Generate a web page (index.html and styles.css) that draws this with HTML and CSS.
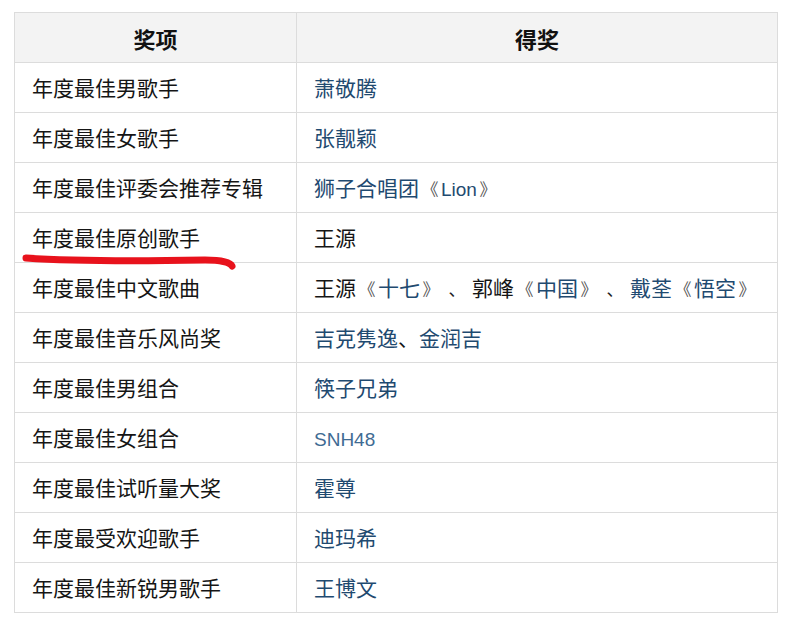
FILE: index.html
```html
<!DOCTYPE html>
<html lang="zh-CN">
<head>
<meta charset="utf-8">
<title>奖项</title>
<link rel="stylesheet" href="styles.css">
</head>
<body>
<div class="page">
  <table class="awards">
    <thead>
      <tr><th class="c1">奖项</th><th>得奖</th></tr>
    </thead>
    <tbody>
      <tr><td class="c1">年度最佳男歌手</td><td><span class="lk">萧敬腾</span></td></tr>
      <tr><td class="c1">年度最佳女歌手</td><td><span class="lk">张靓颖</span></td></tr>
      <tr><td class="c1">年度最佳评委会推荐专辑</td><td><span class="lk">狮子合唱团</span><span class="q">《</span><span class="lk lat">Lion</span><span class="q">》</span></td></tr>
      <tr><td class="c1">年度最佳原创歌手</td><td>王源</td></tr>
      <tr><td class="c1">年度最佳中文歌曲</td><td>王源<span class="q">《</span><span class="lk">十七</span><span class="q">》</span><span class="q dun">、</span>郭峰<span class="q">《</span><span class="lk">中国</span><span class="q">》</span><span class="q dun">、</span><span class="lk">戴荃</span><span class="q">《</span><span class="lk">悟空</span><span class="q">》</span></td></tr>
      <tr><td class="c1">年度最佳音乐风尚奖</td><td><span class="lk">吉克隽逸</span>、<span class="lk">金润吉</span></td></tr>
      <tr><td class="c1">年度最佳男组合</td><td><span class="lk">筷子兄弟</span></td></tr>
      <tr><td class="c1">年度最佳女组合</td><td><span class="lk lat light">SNH48</span></td></tr>
      <tr><td class="c1">年度最佳试听量大奖</td><td><span class="lk">霍尊</span></td></tr>
      <tr><td class="c1">年度最受欢迎歌手</td><td><span class="lk">迪玛希</span></td></tr>
      <tr><td class="c1">年度最佳新锐男歌手</td><td><span class="lk">王博文</span></td></tr>
    </tbody>
  </table>
  <svg class="mark" width="260" height="30" viewBox="0 0 260 30" aria-hidden="true">
    <path d="M26 12 C 70 15, 150 15, 205 14 C 220 14, 230 16, 232 20" fill="none" stroke="#e8121c" stroke-width="7" stroke-linecap="round"/>
  </svg>
</div>
</body>
</html>
```
FILE: styles.css
```css
html, body {
  margin: 0;
  padding: 0;
  background: #ffffff;
}
.page {
  position: relative;
  width: 800px;
  height: 622px;
  padding: 12px 0 0 14px;
  box-sizing: border-box;
  overflow: hidden;
}
.awards {
  border-collapse: collapse;
  width: 764px;
  font-family: "Noto Sans CJK SC", "Liberation Sans", sans-serif;
  font-size: 21px;
  color: #151515;
}
.awards th,
.awards td {
  border: 1px solid #dcdcdc;
  height: 49px;
  padding: 0 0 0 17px;
  text-align: left;
  vertical-align: middle;
  white-space: nowrap;
  line-height: 1;
}
.awards th {
  background: #f3f3f3;
  font-weight: 700;
  font-size: 22px;
  text-align: center;
  padding: 0;
  color: #111;
}
.awards .c1 {
  width: 264px;
}
.lk {
  color: #1f4a70;
}
.lat {
  font-family: "Liberation Sans", sans-serif;
  font-size: 19px;
}
.light {
  color: #3f6b93;
}
.q {
  display: inline-block;
  width: 22px;
  text-align: center;
  color: #555;
  font-size: 17px;
}
.dun {
  width: 30px;
  color: #222;
}
.mark {
  position: absolute;
  left: 0;
  top: 246px;
}
```
